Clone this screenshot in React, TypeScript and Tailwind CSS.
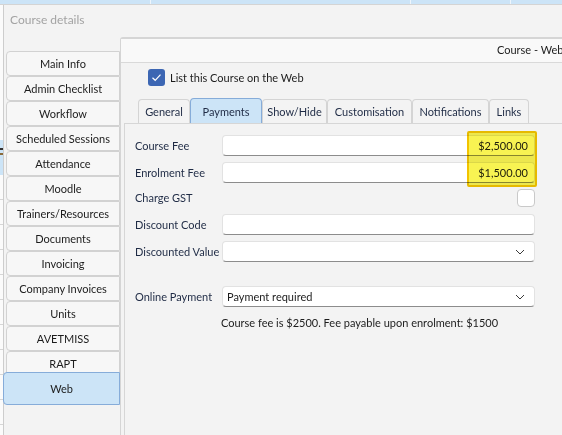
import React from "react";

const navItems = [
  "Main Info",
  "Admin Checklist",
  "Workflow",
  "Scheduled Sessions",
  "Attendance",
  "Moodle",
  "Trainers/Resources",
  "Documents",
  "Invoicing",
  "Company Invoices",
  "Units",
  "AVETMISS",
  "RAPT",
];

const tabs = [
  { label: "General", w: "w-[52px]" },
  { label: "Payments", w: "w-[72px]", active: true },
  { label: "Show/Hide", w: "w-[65px]" },
  { label: "Customisation", w: "w-[85px]" },
  { label: "Notifications", w: "w-[77px]" },
  { label: "Links", w: "w-[40px]" },
];

function Chevron() {
  return (
    <svg width="10" height="6" viewBox="0 0 10 6" className="shrink-0">
      <path d="M1 1 L5 5 L9 1" fill="none" stroke="#3a3a3a" strokeWidth="1" />
    </svg>
  );
}

function Field({ children, className = "" }: { children?: React.ReactNode; className?: string }) {
  return (
    <div
      className={`w-[313px] h-[21px] shrink-0 bg-white border border-[#e2e2e2] border-b-[#8c8c8c] rounded-[4px] flex items-center ${className}`}
    >
      {children}
    </div>
  );
}

function Row({ label, children, className = "" }: { label: string; children: React.ReactNode; className?: string }) {
  return (
    <div className={`flex items-center ${className}`}>
      <span className="w-[87px] shrink-0 pt-px whitespace-nowrap text-[#1f2b45]">{label}</span>
      {children}
    </div>
  );
}

export default function App() {
  return (
    <div className="relative w-[562px] h-[435px] overflow-hidden bg-[#f3f3f3] font-['Lato',sans-serif] text-[11px] text-[#1c1c1c] flex flex-col">
      {/* grid rows peeking out behind the dialog */}
      <div className="h-[5px] shrink-0 flex bg-[#cce4f7] border-b border-[#d4d4d4]">
        <div className="w-[150px]" />
        <div className="w-px bg-[#eef5fb]" />
        <div className="w-[259px]" />
        <div className="w-px bg-[#eef5fb]" />
        <div className="w-[99px]" />
        <div className="w-px bg-[#eef5fb]" />
      </div>

      <div className="flex flex-1 min-h-0">
        <div className="w-[3px] shrink-0 bg-[#fbfbfb] flex flex-col">
          <div className="h-[135px]" />
          <div className="h-[35px] bg-[#cce4f7] flex flex-col">
            <div className="h-[8px]" />
            <div className="h-[2px] bg-[#333]" />
            <div className="h-[3px]" />
            <div className="h-[2px] bg-[#8a6a3a]" />
          </div>
          {Array.from({ length: 10 }).map((_, i) => (
            <div key={i} className="h-[25px] border-b border-[#d6d6d6]" />
          ))}
        </div>

        <div className="flex-1 min-w-0 flex flex-col border-l border-[#cdcdcd] bg-[#f3f3f3]">
          <div className="h-[32px] shrink-0 pl-[6px] pb-[2px] flex items-center text-[12px] text-[#a3a3a3]">
            Course details
          </div>

          <div className="flex flex-1 min-h-0">
            {/* side tabs */}
            <nav className="w-[116px] shrink-0 pt-[14px] pl-[2px] flex flex-col">
              {navItems.map((item) => (
                <div
                  key={item}
                  className="h-[25px] shrink-0 pt-px bg-[#f7f7f7] border border-[#d2d2d2] rounded-l-[4px] flex items-center justify-center whitespace-nowrap"
                >
                  {item}
                </div>
              ))}
              <div className="h-[33px] shrink-0 pt-px -mt-[4px] -ml-[3px] bg-[#cce4f7] border border-[#86acd9] rounded-l-[4px] flex items-center justify-center">
                Web
              </div>
            </nav>

            {/* main panel */}
            <section className="flex-1 min-w-0 flex flex-col border-t-2 border-l border-[#d5d5d5] rounded-tl-[3px]">
              <div className="h-[24px] shrink-0 bg-[#f9f9f9] border-b border-[#d9d9d9] pl-[376px] flex items-center whitespace-nowrap overflow-hidden">
                Course - Web
              </div>

              <div className="flex-1 flex flex-col pl-[3px] pt-[6px]">
                <label className="ml-[24px] h-[17px] flex items-center gap-[5px]">
                  <span className="w-[17px] h-[17px] rounded-[3px] bg-[#3c66b3] flex items-center justify-center">
                    <svg width="13" height="13" viewBox="0 0 13 13">
                      <path d="M2.5 6.8 L5.2 9.3 L10.5 3.6" fill="none" stroke="#fff" strokeWidth="1.2" />
                    </svg>
                  </span>
                  <span className="pt-px">List this Course on the Web</span>
                </label>

                {/* tab strip */}
                <div className="mt-[12px] h-[25px] pl-[14px] flex items-end">
                  {tabs.map((t) =>
                    t.active ? (
                      <div
                        key={t.label}
                        className={`${t.w} h-[25px] pt-[3px] bg-[#cce4f7] border border-b-0 border-[#86acd9] rounded-t-[4px] flex items-center justify-center text-[#1f2b45]`}
                      >
                        {t.label}
                      </div>
                    ) : (
                      <div
                        key={t.label}
                        className={`${t.w} h-[24px] pt-[2px] bg-[#f3f3f3] border border-b-0 border-[#d4d4d4] rounded-t-[4px] flex items-center justify-center text-[#1f2b45]`}
                      >
                        {t.label}
                      </div>
                    )
                  )}
                </div>

                {/* Payments page */}
                <div className="flex-1 border-t border-l border-[#d6d6d6] pl-[10px] pt-[11px] flex flex-col">
                  <Row label="Course Fee">
                    <Field className="justify-end pr-[6px] pt-px">$2,500.00</Field>
                  </Row>
                  <Row label="Enrolment Fee" className="mt-[6px]">
                    <Field className="justify-end pr-[6px] pt-px">$1,500.00</Field>
                  </Row>
                  <Row label="Charge GST" className="mt-[6px] h-[18px]">
                    <div className="w-[313px] flex justify-end">
                      <span className="w-[18px] h-[18px] bg-white border border-[#c9c9c9] rounded-[4px]" />
                    </div>
                  </Row>
                  <Row label="Discount Code" className="mt-[7px]">
                    <Field />
                  </Row>
                  <Row label="Discounted Value" className="mt-[6px]">
                    <Field className="justify-end pr-[9px]">
                      <Chevron />
                    </Field>
                  </Row>
                  <Row label="Online Payment" className="mt-[24px]">
                    <Field className="justify-between pl-[4px] pr-[9px]">
                      <span className="pt-px">Payment required</span>
                      <Chevron />
                    </Field>
                  </Row>
                  <p className="mt-[9px] ml-[86px] leading-[14px] whitespace-nowrap">
                    Course fee is $2500. Fee payable upon enrolment: $1500
                  </p>
                </div>
              </div>
            </section>
          </div>
        </div>
      </div>

      {/* highlight over the fee amounts */}
      <div className="absolute left-[467px] top-[131px] w-[70px] h-[56px] border-2 border-[#f2c300] bg-[#f8f352] mix-blend-multiply rounded-[2px]" />
    </div>
  );
}
